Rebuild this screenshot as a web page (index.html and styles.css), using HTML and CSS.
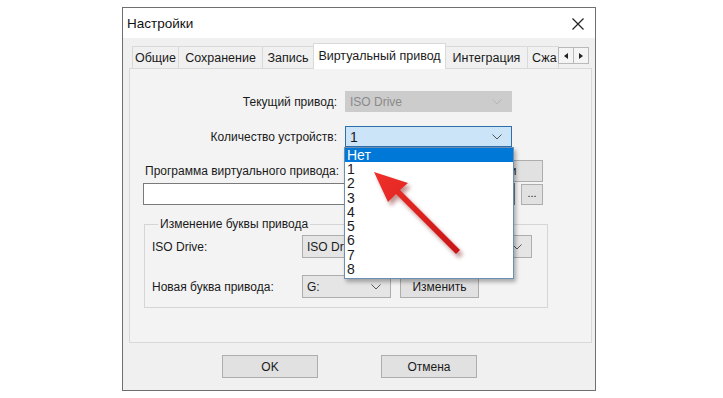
FILE: index.html
```
<!DOCTYPE html>
<html lang="ru">
  <head>
    <meta charset="UTF-8" />
    <title>Настройки</title>
    <link rel="stylesheet" href="styles.css">
  </head>
  <body>
    <div class="dialog">
      <!-- title bar -->
      <div class="titlebar">
        <span class="title">Настройки</span>
        <svg class="close" width="12" height="12" viewBox="0 0 12 12">
          <path d="M0.5 0.5 L11.5 11.5 M11.5 0.5 L0.5 11.5" stroke="#222" stroke-width="1.2" fill="none" />
        </svg>
      </div>

      <!-- tabs -->
      <div class="tabs">
        <div class="tab tab-1">Общие</div>
        <div class="tab tab-2">Сохранение</div>
        <div class="tab tab-3">Запись</div>
        <div class="tab tab-4 active">Виртуальный привод</div>
        <div class="tab tab-5">Интеграция</div>
        <div class="tab tab-6">Сжа</div>
        <div class="tab-scroll">
          <span class="scroll-btn">
            <svg width="4" height="6" viewBox="0 0 4 6"><path d="M4 0 L0 3 L4 6 Z" fill="#222" /></svg>
          </span>
          <span class="scroll-btn">
            <svg width="4" height="6" viewBox="0 0 4 6"><path d="M0 0 L4 3 L0 6 Z" fill="#222" /></svg>
          </span>
        </div>
      </div>

      <!-- tab page -->
      <div class="panel">
        <div class="row row-first">
          <span class="label-right">Текущий привод:</span>
          <div class="combo combo-disabled">
            <span>ISO Drive</span>
            <svg class="chev" width="10" height="6" viewBox="0 0 10 6"><path d="M0.5 0.5 L5 5 L9.5 0.5" stroke="#b5b5b5" fill="none" /></svg>
          </div>
        </div>
        <div class="row row-second">
          <span class="label-right">Количество устройств:</span>
          <div class="combo combo-focus">
            <span>1</span>
            <svg class="chev" width="10" height="6" viewBox="0 0 10 6"><path d="M0.5 0.5 L5 5 L9.5 0.5" stroke="#555" fill="none" /></svg>
          </div>
        </div>
        <div class="row row-program">
          <span class="label-left">Программа виртуального привода:</span>
          <button class="btn btn-setup">Настройки</button>
        </div>
        <div class="row row-path">
          <div class="text-input"></div>
          <button class="btn btn-browse">...</button>
        </div>

        <fieldset class="group">
          <legend>Изменение буквы привода</legend>
          <div class="group-row">
            <span class="group-label">ISO Drive:</span>
            <div class="combo combo-plain combo-drive">
              <span>ISO Drive</span>
              <svg class="chev" width="10" height="6" viewBox="0 0 10 6"><path d="M0.5 0.5 L5 5 L9.5 0.5" stroke="#555" fill="none" /></svg>
            </div>
          </div>
          <div class="group-row group-row-2">
            <span class="group-label">Новая буква привода:</span>
            <div class="combo combo-plain combo-letter">
              <span>G:</span>
              <svg class="chev" width="10" height="6" viewBox="0 0 10 6"><path d="M0.5 0.5 L5 5 L9.5 0.5" stroke="#555" fill="none" /></svg>
            </div>
            <button class="btn btn-change">Изменить</button>
          </div>
        </fieldset>

        <!-- opened drop-down list -->
        <ul class="dropdown">
          <li class="selected">Нет</li>
          <li>1</li>
          <li>2</li>
          <li>3</li>
          <li>4</li>
          <li>5</li>
          <li>6</li>
          <li>7</li>
          <li>8</li>
        </ul>

        <!-- red pointer arrow -->
        <svg class="pointer" width="110" height="100" viewBox="0 0 110 100">
          <defs>
            <filter id="blur" x="-20%" y="-20%" width="140%" height="140%">
              <feGaussianBlur stdDeviation="2" />
            </filter>
            <linearGradient id="red" x1="0" y1="0" x2="1" y2="1">
              <stop offset="0" stop-color="#f0302a" />
              <stop offset="1" stop-color="#c81616" />
            </linearGradient>
          </defs>
          <g transform="translate(3 4)" filter="url(#blur)" opacity="0.45">
            <path d="M4 3 L38 14 L30 21 L90 81 L86 85 L26 25 L18 33 Z" fill="#7a1010" />
          </g>
          <path d="M4 3 L38 14 L30 21 L90 81 L86 85 L26 25 L18 33 Z" fill="url(#red)" />
        </svg>
      </div>

      <!-- dialog buttons -->
      <div class="footer">
        <button class="btn btn-ok">OK</button>
        <button class="btn btn-cancel">Отмена</button>
      </div>
    </div>
  </body>
</html>
```

FILE: styles.css
```
* {
  margin: 0;
  padding: 0;
  box-sizing: border-box;
}
body {
  background-color: #ffffff;
  font-family: "Liberation Sans", Arial, sans-serif;
  font-size: 12px;
  color: #1a1a1a;
}
.dialog {
  margin: 7px 0 0 122px;
  width: 474px;
  height: 384px;
  border: 1px solid #6f6f6f;
  background-color: #f0f0f0;
  display: flex;
  flex-direction: column;
}
.titlebar {
  height: 30px;
  background-color: #ffffff;
  display: flex;
  align-items: center;
  justify-content: space-between;
  padding: 0 11px 0 4px;
}
.title {
  font-size: 13.5px;
  color: #111;
}
.close {
  margin-top: 2px;
}

/* tabs */
.tabs {
  display: flex;
  align-items: flex-end;
  height: 30px;
  padding-left: 9px;
  position: relative;
  z-index: 1;
}
.tab {
  height: 22px;
  border: 1px solid #d9d9d9;
  border-bottom: 0;
  background-color: #f0f0f0;
  padding: 0 5px;
  display: flex;
  align-items: center;
  justify-content: center;
  white-space: nowrap;
  overflow: hidden;
  margin-right: -1px;
  font-size: 12.5px;
}
.tab-1 { width: 47px; }
.tab-2 { width: 85px; }
.tab-3 { width: 52px; }
.tab-4 { width: 133px; }
.tab-5 { width: 83px; }
.tab-6 { width: 32px; justify-content: flex-start; padding: 0 4px; }
.tab.active {
  height: 26px;
  background-color: #ffffff;
  margin-bottom: -1px;
  padding-bottom: 2px;
}
.tab-scroll {
  display: flex;
  margin-bottom: 4px;
}
.scroll-btn {
  width: 16px;
  height: 17px;
  border: 1px solid #b9b9b9;
  background-color: #f4f4f4;
  display: flex;
  align-items: center;
  justify-content: center;
  margin-right: -1px;
}

/* tab page */
.panel {
  position: relative;
  margin: 0 3px 0 6px;
  height: 275px;
  border: 1px solid #d9d9d9;
  background-color: #f3f3f3;
}
.row {
  display: flex;
  align-items: center;
}
.row-first {
  margin-top: 22px;
}
.row-second {
  margin-top: 14px;
}
.label-right {
  width: 207px;
  text-align: right;
  margin-right: 8px;
}
.combo {
  width: 167px;
  height: 21px;
  display: flex;
  align-items: center;
  justify-content: space-between;
  padding: 0 9px 0 4px;
  border: 1px solid #cccccc;
}
.combo-disabled {
  background-color: #cccccc;
  color: #8a8a8a;
}
.combo-focus {
  background-color: #cce4f7;
  border-color: #2f6fa8;
  font-size: 14px;
}
.combo-plain {
  background-color: #e5e5e5;
  border-color: #adadad;
}
.row-program {
  margin-top: 13px;
  height: 22px;
  justify-content: space-between;
  padding: 0 48px 0 15px;
}
.btn {
  font-family: "Liberation Sans", Arial, sans-serif;
  font-size: 12px;
  color: #1a1a1a;
  background-color: #e1e1e1;
  border: 1px solid #adadad;
}
.btn-setup {
  width: 90px;
  height: 22px;
  padding-right: 22px;
}
.row-path {
  margin-top: 1px;
  padding: 0 48px 0 13px;
  justify-content: space-between;
}
.text-input {
  width: 372px;
  height: 22px;
  background-color: #ffffff;
  border: 1px solid #7a7a7a;
}
.btn-browse {
  width: 22px;
  height: 21px;
  font-size: 11px;
  padding-bottom: 3px;
}

/* group box */
.group {
  margin: 12px 43px 0 14px;
  height: 91px;
  border: 1px solid #d5d5d5;
  padding: 0 15px 0 7px;
}
.group legend {
  padding: 0 2px;
  margin-left: 6px;
}
.group-row {
  display: flex;
  align-items: center;
  margin-top: 4px;
}
.group-row-2 {
  margin-top: 17px;
}
.group-label {
  width: 150px;
}
.combo-drive {
  width: 230px;
  height: 23px;
}
.combo-letter {
  width: 89px;
  height: 23px;
}
.btn-change {
  width: 79px;
  height: 23px;
  margin-left: 9px;
}

/* overlays */
.dropdown {
  position: absolute;
  left: 214px;
  top: 78px;
  width: 170px;
  list-style: none;
  background-color: #ffffff;
  border: 1px solid #6d8fb5;
  box-shadow: 2px 3px 4px rgba(0, 0, 0, 0.3);
  font-size: 14px;
  padding-bottom: 2px;
}
.dropdown li {
  height: 14.3px;
  line-height: 14.3px;
  padding-left: 2px;
}
.dropdown li.selected {
  background-color: #0078d7;
  color: #ffffff;
  height: 14px;
}
.pointer {
  position: absolute;
  left: 240px;
  top: 100px;
}

/* footer */
.footer {
  flex: 1;
  display: flex;
  align-items: flex-start;
  padding: 12px 0 0 99px;
  gap: 63px;
}
.btn-ok,
.btn-cancel {
  width: 96px;
  height: 23px;
}
```
